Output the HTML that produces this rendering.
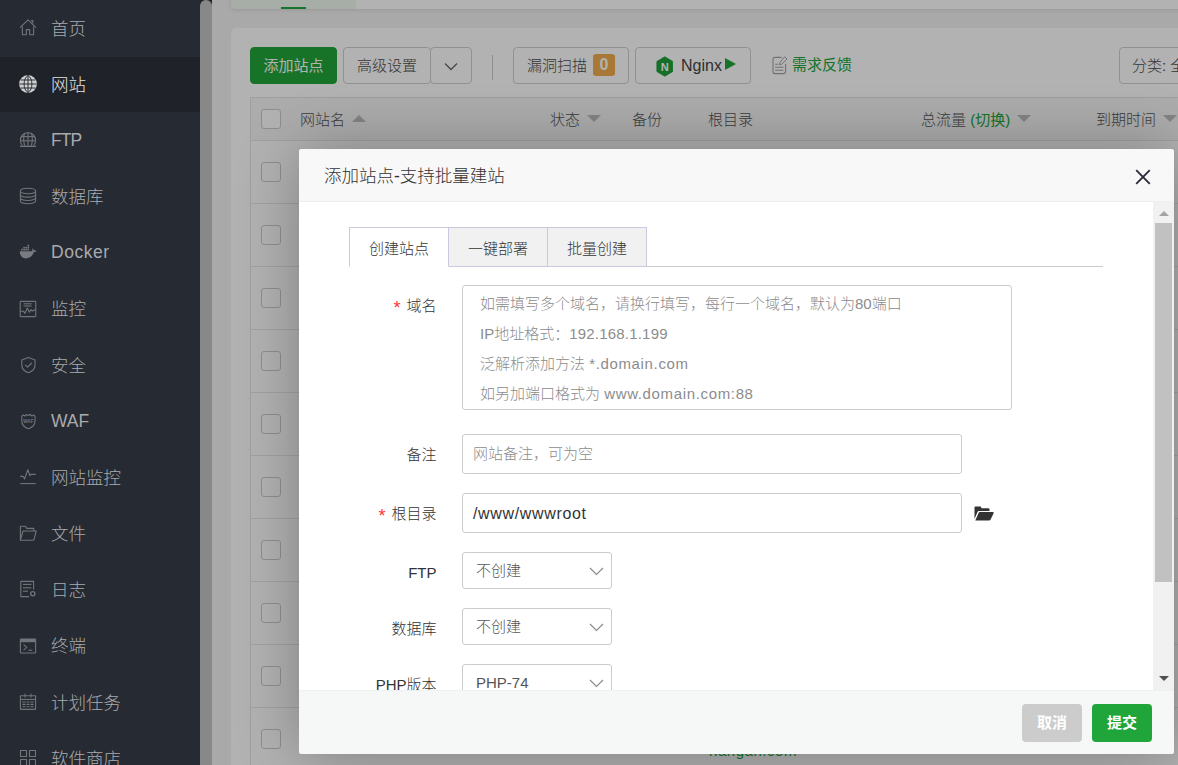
<!DOCTYPE html>
<html lang="zh-CN">
<head>
<meta charset="utf-8">
<title>网站管理</title>
<style>
*{box-sizing:border-box;}
html,body{margin:0;padding:0;}
body{width:1178px;height:765px;overflow:hidden;position:relative;background:#f2f2f2;
 font-family:"Liberation Sans","Noto Sans CJK SC",sans-serif;font-size:15px;color:#666;font-weight:300;}
.abs{position:absolute;}
/* ---------- sidebar ---------- */
#side{position:absolute;left:0;top:0;width:200px;height:765px;background:#262a32;overflow:hidden;z-index:5;}
#side .it{position:absolute;left:0;width:200px;height:55px;color:#a9abae;font-size:17.5px;line-height:55px;}
#side .it.on{background:#1f2228;color:#e2e2e2;}
#side .it span.n1{letter-spacing:-.9px;top:0;}
#side .it span.n2{letter-spacing:.55px;top:0;}
#side .it span.n3{top:0;}
#side .it span{position:absolute;left:51px;top:1px;white-space:nowrap;}
#side .it svg{position:absolute;left:19.4px;top:18.2px;width:18px;height:18px;}
#sbar{position:absolute;left:200px;top:0;width:12px;height:765px;background:#22252c;z-index:5;}
#sbar i{position:absolute;left:0;top:0;width:12px;height:780px;background:#888;border-radius:6px;}
/* ---------- main ---------- */
#topcard{position:absolute;left:231px;top:-20px;width:960px;height:29px;background:#fff;border-radius:5px;box-shadow:0 1px 4px rgba(0,0,0,.1);overflow:hidden;}
#topcard b{position:absolute;left:0;top:0;width:125px;height:29px;background:#eff8f0;}
#topcard u{position:absolute;left:50px;top:27px;width:25px;height:2px;background:#20a53a;}
#card{position:absolute;left:231px;top:28px;width:960px;height:760px;background:#fff;border-radius:5px;}
.btn{position:absolute;top:47px;height:37px;border:1px solid #d0d0d0;border-radius:4px;background:#fff;color:#4c4c4c;font-size:15px;line-height:35px;text-align:center;white-space:nowrap;}
.btn.g{background:#20a53a;border-color:#20a53a;color:#fff;font-weight:400;line-height:36px;}
#tbl{position:absolute;left:250px;top:97px;width:940px;height:700px;border:1px solid #e4e4e4;border-right:0;}
#thead{position:absolute;left:0;top:0;width:100%;height:43px;background:#f6f6f6;border-bottom:1px solid #e4e4e4;}
.th{position:absolute;top:119.5px;transform:translateY(-50%);font-size:15px;color:#555;white-space:nowrap;line-height:20px;}
.row{position:absolute;left:251px;width:940px;height:1px;background:#e8e8e8;}
.cb{position:absolute;left:261px;width:20px;height:20px;border:1px solid #ccc;border-radius:3px;background:#fff;}
.tri{display:inline-block;width:0;height:0;border-left:7px solid transparent;border-right:7px solid transparent;vertical-align:middle;margin-left:7px;position:relative;top:-2px;}
.tri.up{border-bottom:7px solid #bcbcbc;}
.tri.dn{border-top:7px solid #bcbcbc;}
/* ---------- mask + modal ---------- */
#mask{position:absolute;left:0;top:0;width:1178px;height:765px;background:rgba(0,0,0,.3);}
#modal{position:absolute;left:299px;top:149px;width:875px;height:605px;background:#fff;border-radius:3px;box-shadow:1px 1px 62px rgba(0,0,0,.3);overflow:hidden;color:#333;}
#mtitle{position:absolute;left:0;top:0;width:875px;height:53px;background:#f8f8f8;border-bottom:1px solid #eee;font-size:17.5px;color:#333;line-height:54px;padding-left:25px;}
#mfoot{position:absolute;left:0;top:541px;width:875px;height:64px;background:#f6f8f8;border-top:1px solid #edf1f2;}
#mfoot .b{position:absolute;top:13px;width:60px;height:38px;border-radius:4px;color:#fff;font-weight:bold;font-size:15px;line-height:38px;text-align:center;}
#mscroll{position:absolute;left:854px;top:53px;width:21px;height:488px;background:#f1f1f1;}
#mscroll i{position:absolute;left:2px;top:21px;width:17px;height:359px;background:#c1c1c1;}
#mbody{position:absolute;left:0;top:0;width:854px;height:541px;overflow:hidden;}
#mtitle,#mfoot,#mscroll{z-index:2;}
#mscroll s{position:absolute;left:6px;width:0;height:0;border-left:5px solid transparent;border-right:5px solid transparent;}
#mscroll s.au{top:9px;border-bottom:5px solid #a3a3a3;}
#mscroll s.ad{top:474px;border-top:5.5px solid #505050;}
.tab{position:absolute;top:78px;height:40px;border:1px solid #c9c9df;border-left:0;background:#f1f1f1;font-size:15px;line-height:42px;text-align:center;color:#333;}
.lab{position:absolute;right:716.5px;font-size:15px;line-height:20px;color:#333;white-space:nowrap;text-align:right;}
.lab em{color:#f33;font-style:normal;margin-right:6px;font-size:18px;font-weight:400;position:relative;top:3px;line-height:1px;}
.inp{position:absolute;left:163px;border:1px solid #ccc;border-radius:3px;background:#fff;font-size:15px;color:#333;}
.sel{width:150px;height:37px;line-height:35px;padding-left:13px;color:#555;}
.sel svg{position:absolute;right:7px;top:13.5px;}
.ls{letter-spacing:.65px;}
.ls2{letter-spacing:.2px;}
</style>
</head>
<body>
<div id="side">
<div class="it" style="top:0.60px"><svg viewBox="0 0 18 18" fill="none" stroke="#72757a" stroke-width="1.1" stroke-linejoin="round" stroke-linecap="butt" ><path d="M1 8.6 L9 0.8 L17 8.6"/><path d="M12 1.6 H13.8 V4.6"/><path d="M3.4 7.4 V15.8 H7.3 V10.6 H10.7 V15.8 H14.6 V7.4"/></svg><span>首页</span></div>
<div class="it on" style="top:56.77px"><svg viewBox="0 0 18 18"><circle cx="9" cy="9" r="8.9" fill="#cfd0d2"/><g stroke="#1f2228" stroke-width="0.9" fill="none"><path d="M9 0.4 V17.6"/><path d="M0.4 9 H17.6"/><path d="M1.6 5 H16.4"/><path d="M1.6 13 H16.4"/><path d="M9 0.4 C3.8 3.5 3.8 14.5 9 17.6"/><path d="M9 0.4 C14.2 3.5 14.2 14.5 9 17.6"/></g></svg><span>网站</span></div>
<div class="it" style="top:112.94px"><svg viewBox="0 0 18 18" fill="none" stroke="#72757a" stroke-width="1.1" stroke-linejoin="round" stroke-linecap="butt" ><path d="M3.2 14.2 A7.6 7.6 0 1 1 14.8 14.2"/><path d="M9 0.9 V14.6"/><path d="M5.6 1.8 C4.6 5 4.6 11 5.6 14.6"/><path d="M12.4 1.8 C13.4 5 13.4 11 12.4 14.6"/><path d="M2 5.6 H16"/><path d="M1.5 9.8 H16.5"/><path d="M1 15.3 H17" stroke-width="1.4"/></svg><span class="n1">FTP</span></div>
<div class="it" style="top:169.11px"><svg viewBox="0 0 18 18" fill="none" stroke="#72757a" stroke-width="1.1" stroke-linejoin="round" stroke-linecap="butt" ><ellipse cx="9" cy="4" rx="7.6" ry="2.7"/><path d="M1.4 4 V14 C1.4 17.6 16.6 17.6 16.6 14 V4"/><path d="M1.4 7.4 C1.4 11 16.6 11 16.6 7.4"/><path d="M1.4 10.8 C1.4 14.4 16.6 14.4 16.6 10.8"/></svg><span>数据库</span></div>
<div class="it" style="top:225.28px"><svg viewBox="0 0 18 18"><g fill="#787b80"><path d="M0.8 8.2 H13.2 C13.6 7.4 13.5 6.4 13 5.6 C14.2 5.8 14.9 6.6 15 7.4 C16 7.1 16.9 7.3 17.4 7.8 C16.8 8.9 15.8 9.2 14.8 9.2 C13.6 13 10.6 15.4 6.6 15.4 C3 15.4 0.8 12.6 0.8 8.2 Z"/><rect x="2.2" y="5.8" width="1.6" height="1.6"/><rect x="4.3" y="5.8" width="1.6" height="1.6"/><rect x="6.4" y="5.8" width="1.6" height="1.6"/><rect x="8.5" y="5.8" width="1.6" height="1.6"/><rect x="4.3" y="3.8" width="1.6" height="1.6"/><rect x="6.4" y="3.8" width="1.6" height="1.6"/><rect x="8.5" y="3.8" width="1.6" height="1.6"/><rect x="8.5" y="1.8" width="1.6" height="1.6"/></g></svg><span class="n2">Docker</span></div>
<div class="it" style="top:281.45px"><svg viewBox="0 0 18 18" fill="none" stroke="#72757a" stroke-width="1.1" stroke-linejoin="round" stroke-linecap="butt" ><rect x="1.2" y="1.4" width="15.6" height="15.2" rx="0.6"/><path d="M4.6 3.8 H12.6"/><path d="M4.6 6 H12.6"/><path d="M1.4 11.2 H4.6 L6 13.4 L8.3 8 L10.4 12.2 L12 9.6 L13.4 11 L16.6 9.4"/></svg><span>监控</span></div>
<div class="it" style="top:337.62px"><svg viewBox="0 0 18 18" fill="none" stroke="#72757a" stroke-width="1.1" stroke-linejoin="round" stroke-linecap="butt" ><path d="M9.4 1.6 L16 4 V9 C16 12.8 12.8 15.6 9.4 16.8 C6 15.6 2.8 12.8 2.8 9 V4 Z"/><path d="M6.2 8.8 L8.6 11.2 L12.8 7"/></svg><span>安全</span></div>
<div class="it" style="top:393.79px"><svg viewBox="0 0 18 18" fill="none" stroke="#72757a" stroke-width="1.1" stroke-linejoin="round" stroke-linecap="butt" ><path d="M2.8 4.2 L4.2 3 L6 4 L7.6 2.4 L9.4 3.4 L11.2 2.4 L12.8 4 L14.6 3 L16 4.2 V9 C16 12.8 12.8 15.6 9.4 16.8 C6 15.6 2.8 12.8 2.8 9 Z"/><text x="9.4" y="10.6" text-anchor="middle" font-family="Liberation Sans, sans-serif" font-size="4.6" font-weight="bold" stroke="none" fill="#72757a">WAF</text></svg><span class="n3">WAF</span></div>
<div class="it" style="top:449.96px"><svg viewBox="0 0 18 18" fill="none" stroke="#72757a" stroke-width="1.1" stroke-linejoin="round" stroke-linecap="butt" ><path d="M1.2 8.4 H4.2 L5.6 11 L8.8 1.8 L11 7.8 L11.8 6.4 H16.8"/><path d="M1.2 15.6 H16.8"/></svg><span>网站监控</span></div>
<div class="it" style="top:506.13px"><svg viewBox="0 0 18 18" fill="none" stroke="#72757a" stroke-width="1.1" stroke-linejoin="round" stroke-linecap="butt" ><path d="M1.4 16.2 V2.2 H6.4 L7.8 4.4 H14.8 V7"/><path d="M1.4 16.2 L4 7 H17.2 L14.8 16.2 Z"/></svg><span>文件</span></div>
<div class="it" style="top:562.30px"><svg viewBox="0 0 18 18" fill="none" stroke="#72757a" stroke-width="1.1" stroke-linejoin="round" stroke-linecap="butt" ><path d="M14.6 9.6 V1.4 H1.8 V16.6 H10.2"/><path d="M4 4.4 H12.4"/><path d="M4 7.8 H12.4"/><path d="M4 11.2 H9"/><circle cx="13.8" cy="13.8" r="2.1" stroke-width="1.3"/></svg><span>日志</span></div>
<div class="it" style="top:618.47px"><svg viewBox="0 0 18 18" fill="none" stroke="#72757a" stroke-width="1.1" stroke-linejoin="round" stroke-linecap="butt" ><rect x="1.4" y="2" width="15.2" height="14" rx="0.4"/><rect x="1.4" y="2" width="15.2" height="3.2" fill="#72757a" stroke="none"/><path d="M4.6 7.6 L7.8 10.4 L4.6 13.2"/><path d="M9.4 13.2 H13.2"/></svg><span>终端</span></div>
<div class="it" style="top:674.64px"><svg viewBox="0 0 18 18" fill="none" stroke="#72757a" stroke-width="1.1" stroke-linejoin="round" stroke-linecap="butt" ><rect x="1.4" y="2.8" width="15.2" height="13.6" rx="0.4"/><path d="M1.4 6.4 H16.6"/><path d="M6 0.8 V4.4"/><path d="M12 0.8 V4.4"/><path d="M3.4 9 H6.6 M7.6 9 H10.4 M11.4 9 H14.6 M3.4 11.4 H6.6 M7.6 11.4 H10.4 M11.4 11.4 H14.6 M3.4 13.8 H6.6 M7.6 13.8 H10.4 M11.4 13.8 H14.6"/></svg><span>计划任务</span></div>
<div class="it" style="top:730.81px"><svg viewBox="0 0 18 18" fill="none" stroke="#72757a" stroke-width="1.1" stroke-linejoin="round" stroke-linecap="butt" ><rect x="1.5" y="1.5" width="6" height="6"/><rect x="10.5" y="1.5" width="6" height="6"/><rect x="1.5" y="10.5" width="6" height="6"/><rect x="10.5" y="10.5" width="6" height="6"/></svg><span>软件商店</span></div>
</div>
<div id="sbar"><i></i></div>

<div id="topcard"><b></b><u></u></div>
<div id="card"></div>
<div class="btn g" style="left:250px;width:87px;">添加站点</div>
<div class="btn" style="left:343px;width:88px;">高级设置</div>
<div class="btn" style="left:430px;width:42px;"><svg width="14" height="9" viewBox="0 0 14 9" style="position:absolute;left:13px;top:14px"><path d="M1 1.5 L7 7.5 L13 1.5" fill="none" stroke="#666" stroke-width="1.3"/></svg></div>
<div class="abs" style="left:492px;top:55px;width:1px;height:25px;background:#ccc"></div>
<div class="btn" style="left:513px;width:116px;text-align:left;padding-left:13px;">漏洞扫描<span style="position:absolute;left:79px;top:6px;width:22px;height:22px;background:#f0ad4e;color:#fff;border-radius:3px;font-weight:bold;font-size:16px;line-height:22px;text-align:center;">0</span></div>
<div class="btn" style="left:635px;width:116px;text-align:left;padding-left:45px;font-size:16px;color:#444;font-weight:400;"><svg style="position:absolute;left:19.6px;top:8.4px" width="17.6" height="21" viewBox="0 0 19 22"><path d="M9.5 0.6 L18 5.6 V16.4 L9.5 21.4 L1 16.4 V5.6 Z" fill="#1fa03b" stroke="#1fa03b" stroke-width="1" stroke-linejoin="round"/><text x="9.5" y="15.4" text-anchor="middle" font-family="Liberation Sans, sans-serif" font-weight="bold" font-size="12" fill="#fff">N</text></svg>Nginx<i style="position:absolute;left:89px;top:10.4px;width:0;height:0;border-top:6.8px solid transparent;border-bottom:6.8px solid transparent;border-left:11.6px solid #20a53a;"></i></div><svg class="abs" style="left:772px;top:55.5px" width="16" height="19" viewBox="0 0 16 19" fill="none" stroke="#a4a4a4" stroke-width="1.1" stroke-linecap="round" stroke-linejoin="round"><path d="M9.2 1.4 H3 C1.9 1.4 1 2.3 1 3.4 V15.6 C1 16.7 1.9 17.6 3 17.6 H11.6 C12.7 17.6 13.6 16.7 13.6 15.6 V8.4"/><path d="M13 1 L15 3 L9.6 8.2 L7.6 8.6 L8 6.6 Z" stroke-width="1"/><path d="M3.6 8.2 H6 M3.6 11.2 H11 M3.6 14.2 H11"/></svg>
<div class="abs" style="left:792px;top:55px;font-size:15px;line-height:20px;color:#20a53a;font-weight:400;">需求反馈</div>
<div class="btn" style="left:1119px;width:120px;text-align:left;padding-left:12px;">分类: 全部分类</div>

<div id="tbl"><div id="thead"></div></div>
<div class="th" style="left:300px">网站名<i class="tri up"></i></div>
<div class="th" style="left:550px">状态<i class="tri dn"></i></div>
<div class="th" style="left:632px">备份</div>
<div class="th" style="left:708px">根目录</div>
<div class="th" style="left:921px">总流量 <span style="color:#20a53a;font-weight:400">(切换)</span><i class="tri dn"></i></div>
<div class="th" style="left:1096px">到期时间<i class="tri dn"></i></div>
<div class="cb" style="top:109px"></div>
<div class="row" style="top:203.4px"></div>
<div class="cb" style="top:161.9px"></div>
<div class="row" style="top:266.4px"></div>
<div class="cb" style="top:224.9px"></div>
<div class="row" style="top:329.4px"></div>
<div class="cb" style="top:287.9px"></div>
<div class="row" style="top:392.4px"></div>
<div class="cb" style="top:350.9px"></div>
<div class="row" style="top:455.4px"></div>
<div class="cb" style="top:413.9px"></div>
<div class="row" style="top:518.4px"></div>
<div class="cb" style="top:476.9px"></div>
<div class="row" style="top:581.4px"></div>
<div class="cb" style="top:539.9px"></div>
<div class="row" style="top:644.4px"></div>
<div class="cb" style="top:602.9px"></div>
<div class="row" style="top:707.4px"></div>
<div class="cb" style="top:665.9px"></div>
<div class="row" style="top:770.4px"></div>
<div class="cb" style="top:728.9px"></div>
<div class="abs" style="left:709px;top:741px;font-size:15px;line-height:20px;color:#20a53a;white-space:nowrap;letter-spacing:.55px;font-weight:400;">nangan.com</div>

<div id="mask"></div>

<div id="modal">
  <div id="mtitle">添加站点-支持批量建站<svg style="position:absolute;left:835.5px;top:19.6px" width="16" height="16" viewBox="0 0 16 16"><path d="M1.2 1.2 L14.8 14.8 M14.8 1.2 L1.2 14.8" stroke="#2d2c3c" stroke-width="1.9" fill="none"/></svg></div>

  <div id="mbody">
    <div class="abs" style="left:50px;top:117px;width:754px;height:1px;background:#ccc"></div>
    <div class="tab" style="left:50px;width:100px;background:#fff;border-left:1px solid #c9c9df;border-bottom-color:#fff;">创建站点</div>
    <div class="tab" style="left:150px;width:99px;">一键部署</div>
    <div class="tab" style="left:249px;width:99px;">批量创建</div>

    <div class="lab" style="top:147px"><em>*</em>域名</div>
    <div class="inp" style="top:136px;width:550px;height:125px;padding:3px 17px;line-height:30px;color:#8c8c8c;white-space:nowrap;overflow:hidden;">如需填写多个域名，请换行填写，每行一个域名，默认为80端口<br>IP地址格式：<span class="ls2">192.168.1.199</span><br>泛解析添加方法 <span class="ls">*.domain.com</span><br>如另加端口格式为 <span class="ls">www.domain.com:88</span></div>

    <div class="lab" style="top:296px">备注</div>
    <div class="inp" style="top:285px;width:500px;height:40px;line-height:38px;padding-left:10px;color:#8c8c8c;">网站备注，可为空</div>

    <div class="lab" style="top:355px"><em>*</em>根目录</div>
    <div class="inp" style="top:344px;width:500px;height:40px;line-height:40px;padding-left:10px;font-size:16px;letter-spacing:.65px;font-weight:400;">/www/wwwroot</div>
    <svg class="abs" style="left:675px;top:357px" width="20" height="15" viewBox="0 0 20 15"><path fill="#333" d="M0.5 13 V1.6 C0.5 1 1 0.5 1.6 0.5 H6.2 C6.8 0.5 7.3 1 7.3 1.6 V2.3 H14.4 C15 2.3 15.5 2.8 15.5 3.4 V5 H5.2 C4.4 5 3.7 5.5 3.4 6.2 Z M1.3 14.4 L4.6 6.9 C4.8 6.4 5.2 6.1 5.8 6.1 H19 C19.6 6.1 19.9 6.6 19.6 7.2 L16.6 13.6 C16.4 14.1 15.9 14.4 15.4 14.4 Z"/></svg>

    <div class="lab" style="top:414px">FTP</div>
    <div class="inp sel" style="top:403px;">不创建<svg width="15" height="9" viewBox="0 0 15 9"><path d="M1 1 L7.5 7.5 L14 1" fill="none" stroke="#888" stroke-width="1.1"/></svg></div>

    <div class="lab" style="top:470px">数据库</div>
    <div class="inp sel" style="top:459px;">不创建<svg width="15" height="9" viewBox="0 0 15 9"><path d="M1 1 L7.5 7.5 L14 1" fill="none" stroke="#888" stroke-width="1.1"/></svg></div>

    <div class="lab" style="top:526px">PHP版本</div>
    <div class="inp sel" style="top:515px;">PHP-74<svg width="15" height="9" viewBox="0 0 15 9"><path d="M1 1 L7.5 7.5 L14 1" fill="none" stroke="#888" stroke-width="1.1"/></svg></div>
  </div>
  <div id="mscroll"><i></i><s class="au"></s><s class="ad"></s></div>
  <div id="mfoot">
    <div class="b" style="left:723px;background:#ccc;">取消</div>
    <div class="b" style="left:793px;background:#20a53a;">提交</div>
  </div>
</div>
</body>
</html>
